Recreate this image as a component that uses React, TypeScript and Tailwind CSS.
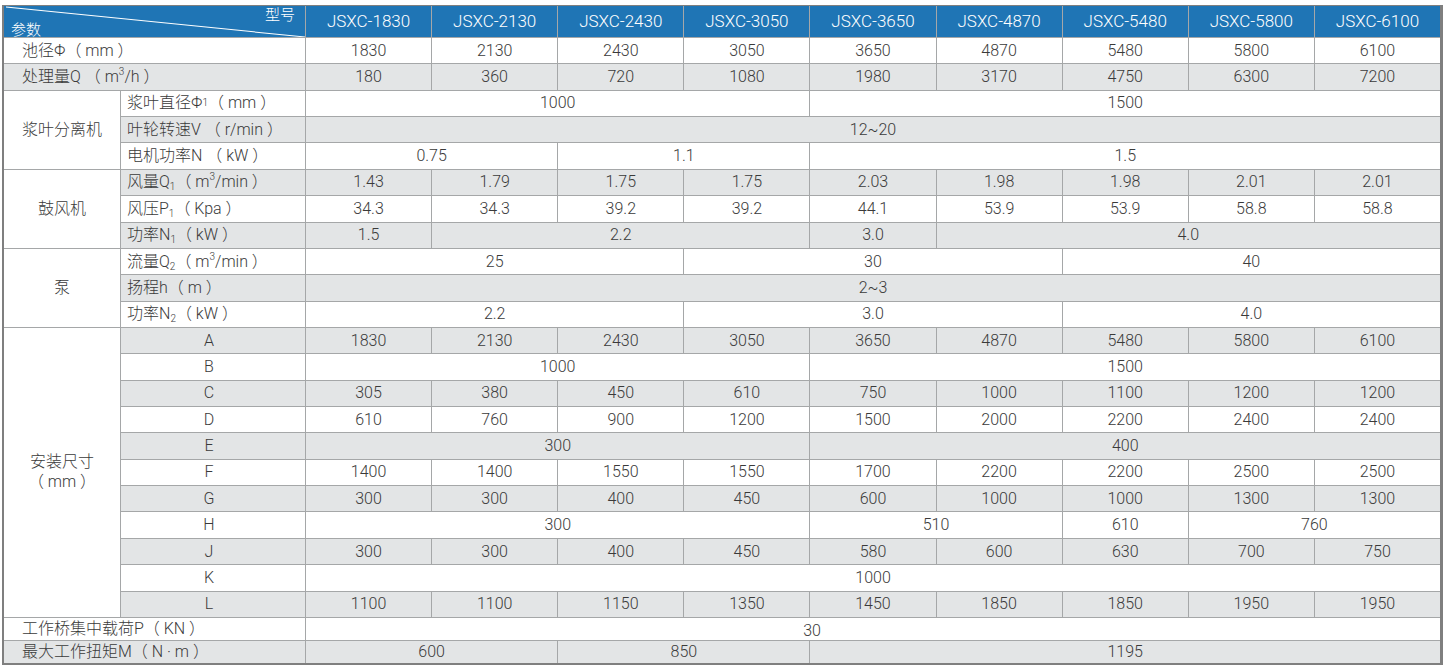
import React from "react";

type Cell = { v: string; s: number };
type Row = { label?: React.ReactNode; sub?: React.ReactNode; subCenter?: boolean; cat?: { text: React.ReactNode; span: string }; cells: Cell[]; offset?: boolean };

const spanCls: Record<number, string> = {
  1: "",
  2: "col-span-2",
  3: "col-span-3",
  4: "col-span-4",
  5: "col-span-5",
  9: "col-span-9",
};

const all = (vals: string[]): Cell[] => vals.map((v) => ({ v, s: 1 }));

const Sub = ({ c }: { c: string }) => <span className="text-[10px] relative top-[5px]">{c}</span>;
const Sup = ({ c }: { c: string }) => <span className="text-[10px] relative top-[-5px]">{c}</span>;

const models = ["JSXC-1830", "JSXC-2130", "JSXC-2430", "JSXC-3050", "JSXC-3650", "JSXC-4870", "JSXC-5480", "JSXC-5800", "JSXC-6100"];

const rows: Row[] = [
  { label: <>池径Φ（ mm ）</>, cells: all(["1830", "2130", "2430", "3050", "3650", "4870", "5480", "5800", "6100"]) },
  { label: <>处理量Q （ m<Sup c="3" />/h ）</>, cells: all(["180", "360", "720", "1080", "1980", "3170", "4750", "6300", "7200"]) },
  {
    cat: { text: "浆叶分离机", span: "row-span-3" },
    sub: <>浆叶直径Φ<span className="text-[10px]"> 1</span>（ mm ）</>,
    cells: [{ v: "1000", s: 4 }, { v: "1500", s: 5 }],
  },
  { sub: <>叶轮转速V （ r/min ）</>, cells: [{ v: "12~20", s: 9 }] },
  { sub: <>电机功率N （ kW ）</>, cells: [{ v: "0.75", s: 2 }, { v: "1.1", s: 2 }, { v: "1.5", s: 5 }] },
  {
    cat: { text: "鼓风机", span: "row-span-3" },
    sub: <>风量Q<Sub c="1" />（ m<Sup c="3" />/min ）</>,
    cells: all(["1.43", "1.79", "1.75", "1.75", "2.03", "1.98", "1.98", "2.01", "2.01"]),
  },
  { sub: <>风压P<Sub c="1" />（ Kpa ）</>, cells: all(["34.3", "34.3", "39.2", "39.2", "44.1", "53.9", "53.9", "58.8", "58.8"]) },
  { sub: <>功率N<Sub c="1" />（ kW ）</>, cells: [{ v: "1.5", s: 1 }, { v: "2.2", s: 3 }, { v: "3.0", s: 1 }, { v: "4.0", s: 4 }] },
  {
    cat: { text: "泵", span: "row-span-3" },
    sub: <>流量Q<Sub c="2" />（ m<Sup c="3" />/min ）</>,
    cells: [{ v: "25", s: 3 }, { v: "30", s: 3 }, { v: "40", s: 3 }],
  },
  { sub: <>扬程h（ m ）</>, cells: [{ v: "2~3", s: 9 }] },
  { sub: <>功率N<Sub c="2" />（ kW ）</>, cells: [{ v: "2.2", s: 3 }, { v: "3.0", s: 3 }, { v: "4.0", s: 3 }] },
  {
    cat: { text: <>安装尺寸<br />（ mm ）</>, span: "row-span-11" },
    sub: "A",
    subCenter: true,
    cells: all(["1830", "2130", "2430", "3050", "3650", "4870", "5480", "5800", "6100"]),
  },
  { sub: "B", subCenter: true, cells: [{ v: "1000", s: 4 }, { v: "1500", s: 5 }] },
  { sub: "C", subCenter: true, cells: all(["305", "380", "450", "610", "750", "1000", "1100", "1200", "1200"]) },
  { sub: "D", subCenter: true, cells: all(["610", "760", "900", "1200", "1500", "2000", "2200", "2400", "2400"]) },
  { sub: "E", subCenter: true, cells: [{ v: "300", s: 4 }, { v: "400", s: 5 }] },
  { sub: "F", subCenter: true, cells: all(["1400", "1400", "1550", "1550", "1700", "2200", "2200", "2500", "2500"]) },
  { sub: "G", subCenter: true, cells: all(["300", "300", "400", "450", "600", "1000", "1000", "1300", "1300"]) },
  { sub: "H", subCenter: true, cells: [{ v: "300", s: 4 }, { v: "510", s: 2 }, { v: "610", s: 1 }, { v: "760", s: 2 }] },
  { sub: "J", subCenter: true, cells: all(["300", "300", "400", "450", "580", "600", "630", "700", "750"]) },
  { sub: "K", subCenter: true, cells: [{ v: "1000", s: 9 }] },
  { sub: "L", subCenter: true, cells: all(["1100", "1100", "1150", "1350", "1450", "1850", "1850", "1950", "1950"]) },
  { label: <>工作桥集中载荷P（ KN ）</>, cells: [{ v: "30", s: 9 }], offset: true },
  { label: <>最大工作扭矩M（ N · m ）</>, cells: [{ v: "600", s: 2 }, { v: "850", s: 2 }, { v: "1195", s: 5 }] },
];

export default function App() {
  const font = { fontFamily: "Roboto, 'Noto Sans CJK SC', 'Liberation Sans', sans-serif" };
  return (
    <div className="w-[1445px] h-[665px] bg-white pt-[5px] pl-[2px]" style={font}>
      <div className="w-[1441px] border-t border-l-2 border-r-[3px] border-b-2 border-[#7f7f7f]">
        <div className="grid grid-cols-[116px_184px_repeat(9,1fr)] grid-rows-[31px_repeat(22,25.36px)_22px_22px] gap-px bg-[#a5a7a8] text-[16px] font-light text-[#3a3a3a] leading-none">
          {/* header */}
          <div className="col-span-2 bg-[#1f75b5] relative text-white text-[15px] flex flex-col justify-between pl-[7px] pr-[10px] pt-[2px] pb-[3px]">
            <svg className="absolute inset-0 w-full h-full" viewBox="0 0 300 31" preserveAspectRatio="none">
              <line x1="2" y1="1" x2="300" y2="31" stroke="#ffffff" strokeWidth="1" />
            </svg>
            <span className="self-end">型号</span>
            <span className="self-start">参数</span>
          </div>
          {models.map((m) => (
            <div key={m} className="bg-[#1f75b5] text-white text-[17px] flex items-center justify-center">
              {m}
            </div>
          ))}
          {rows.map((r, i) => {
            const bg = i % 2 === 1 ? "bg-[#e3e5e6]" : "bg-white";
            return (
              <React.Fragment key={i}>
                {r.cat && (
                  <div className={`${r.cat.span} bg-white flex items-center justify-center text-center leading-[20px]`}>
                    <div>{r.cat.text}</div>
                  </div>
                )}
                {r.label && (
                  <div className={`col-span-2 ${bg} flex items-center pl-[18px] whitespace-nowrap`}>{r.label}</div>
                )}
                {r.sub && (
                  <div className={`${bg} flex items-center whitespace-nowrap ${r.subCenter ? "justify-center pr-[8px]" : "pl-[6px]"}`}>
                    {r.sub}
                  </div>
                )}
                {r.cells.map((c, j) => (
                  <div
                    key={j}
                    className={`${spanCls[c.s]} ${bg} flex items-center justify-center ${r.offset ? "pr-[122px] pt-[4px]" : ""}`}
                  >
                    {c.v}
                  </div>
                ))}
              </React.Fragment>
            );
          })}
        </div>
      </div>
    </div>
  );
}
